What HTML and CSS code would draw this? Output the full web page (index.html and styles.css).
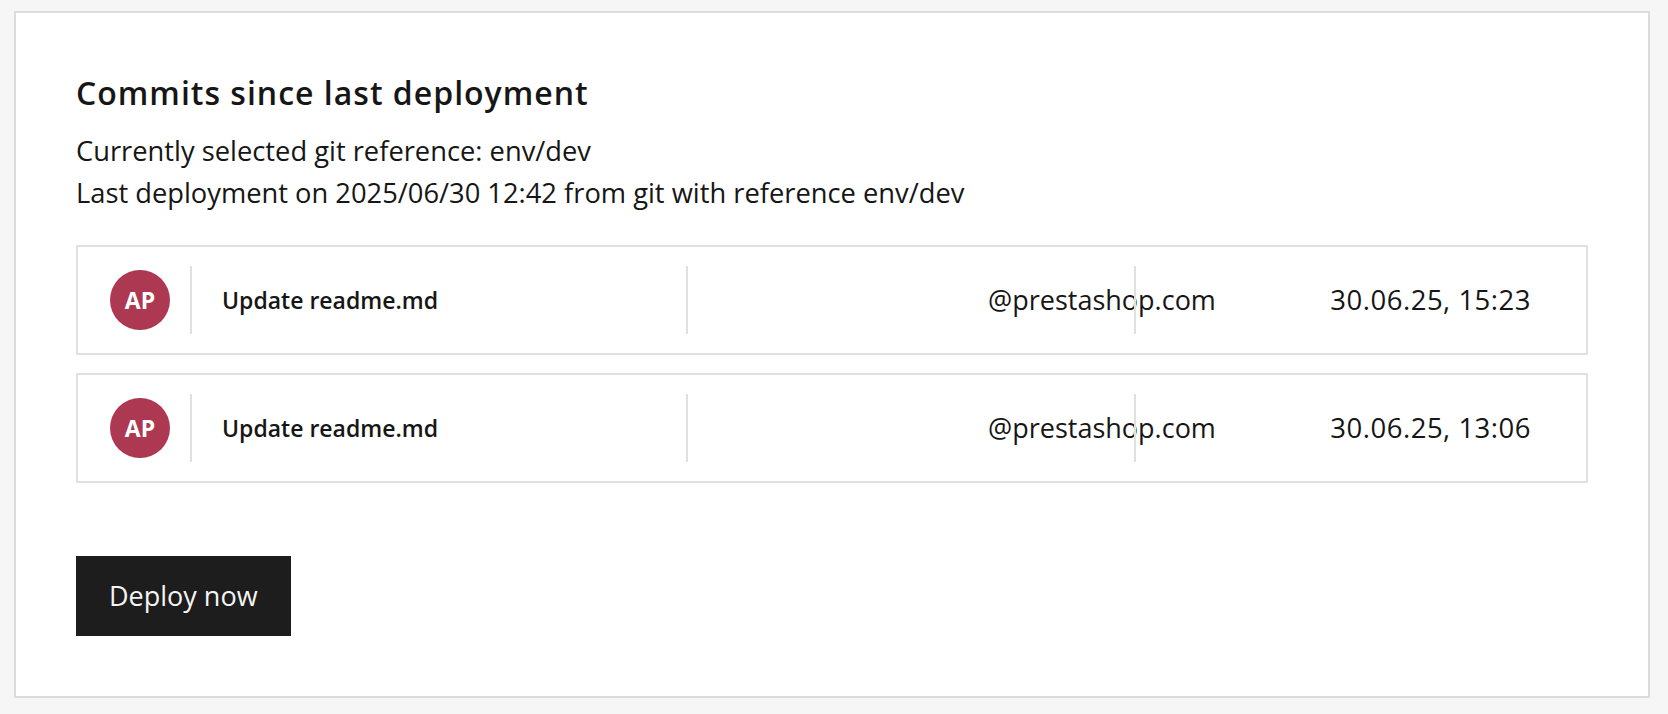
FILE: index.html
```html
<!DOCTYPE html>
<html lang="en">
<head>
<meta charset="utf-8">
<title>Commits since last deployment</title>
<link rel="stylesheet" href="styles.css">
</head>
<body>
<main class="page">
  <section class="card">
    <h2 class="title">Commits since last deployment</h2>
    <div class="meta">
      <p class="meta-line">Currently selected git reference: env/dev</p>
      <p class="meta-line">Last deployment on 2025/06/30 12:42 from git with reference env/dev</p>
    </div>
    <ul class="commits">
      <li class="commit">
        <div class="cell cell-avatar"><span class="avatar">AP</span></div>
        <div class="cell cell-msg">Update readme.md</div>
        <div class="cell cell-email">@prestashop.com</div>
        <div class="cell cell-date">30.06.25, 15:23</div>
      </li>
      <li class="commit">
        <div class="cell cell-avatar"><span class="avatar">AP</span></div>
        <div class="cell cell-msg">Update readme.md</div>
        <div class="cell cell-email">@prestashop.com</div>
        <div class="cell cell-date">30.06.25, 13:06</div>
      </li>
    </ul>
    <button class="deploy" type="button">Deploy now</button>
  </section>
</main>
</body>
</html>
```
FILE: styles.css
```css
html, body {
  margin: 0;
  padding: 0;
  background: #f6f6f6;
}

body {
  font-family: "Open Sans", "Noto Sans", Arial, sans-serif;
  color: #161616;
}

.page {
  padding: 11px 18px 16px 14px;
}

.card {
  background: #ffffff;
  border: 2px solid #dcdcdc;
  padding: 60px;
}

.title {
  margin: 0;
  font-size: 32px;
  line-height: 40px;
  font-weight: 600;
  letter-spacing: 1px;
  color: #161616;
}

.meta {
  margin-top: 17px;
}

.meta-line {
  margin: 0;
  font-size: 27.3px;
  line-height: 42px;
  font-weight: 400;
}

.commits {
  list-style: none;
  margin: 31px 0 0;
  padding: 0;
  display: flex;
  flex-direction: column;
  gap: 18px;
}

.commit {
  display: grid;
  grid-template-columns: 112px 496px 448px 1fr;
  align-items: center;
  border: 2px solid #e0e0e0;
  padding: 19px 0;
}

.cell {
  height: 68px;
  display: flex;
  align-items: center;
  box-sizing: border-box;
  white-space: nowrap;
}

.cell + .cell {
  border-left: 2px solid #e0e0e0;
}

.cell-avatar {
  padding-left: 32px;
}

.avatar {
  width: 60px;
  height: 60px;
  border-radius: 50%;
  background: #ad3851;
  color: #ffffff;
  display: flex;
  align-items: center;
  justify-content: center;
  font-size: 23px;
  font-weight: 700;
  line-height: 1;
}

.cell-msg {
  padding-left: 30px;
  font-size: 23px;
  line-height: 30px;
  font-weight: 600;
}

.cell-email {
  padding-left: 300px;
  font-size: 27px;
  line-height: 38px;
  overflow: visible;
}

.cell-date {
  justify-content: flex-end;
  padding-right: 55px;
  font-size: 27.5px;
  line-height: 38px;
  letter-spacing: 0.5px;
}

.deploy {
  display: block;
  margin-top: 73px;
  padding: 21px 33px;
  border: 0;
  border-radius: 0;
  background: #1d1d1d;
  color: #f4f4f4;
  font-family: "Open Sans", "Noto Sans", Arial, sans-serif;
  font-size: 27px;
  line-height: 38px;
  font-weight: 400;
  cursor: pointer;
}
```
